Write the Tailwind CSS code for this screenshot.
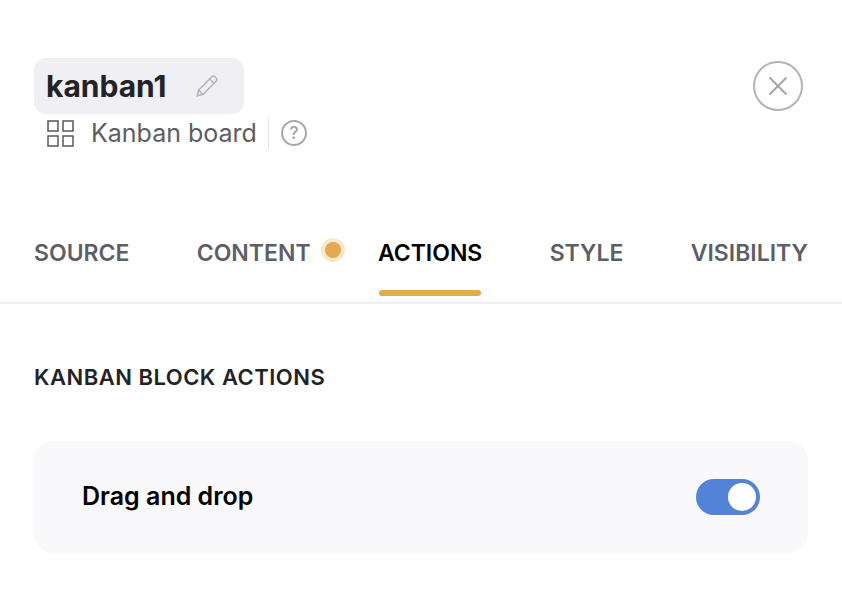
<!DOCTYPE html>
<html lang="en">
<head>
    <meta charset="UTF-8">
    <title>Kanban block settings</title>
    <script src="https://cdn.jsdelivr.net/npm/@tailwindcss/browser@4"></script>
</head>
<body class="bg-white font-['Inter',sans-serif] h-[598px] w-[842px] overflow-hidden">
    <header class="flex justify-between pl-[34px] pr-[39px] pt-[58px] h-[206px]">
        <div>
            <div class="flex items-center w-[210px] h-[56px] rounded-[12px] bg-[#efeff4] pl-[12px] gap-[27px]">
                <span class="text-[30px] leading-none font-bold text-[#212326]">kanban1</span>
                <svg class="w-[26px] h-[26px] text-[#b5b5ba]" viewBox="0 0 24 24" fill="none" stroke="currentColor" stroke-width="1.4"><path d="M3 21l1.2-5.2L16.5 3.5a2 2 0 0 1 2.8 0l1.2 1.2a2 2 0 0 1 0 2.8L8.2 19.8 3 21z"/><path d="M14.5 5.5l4 4"/><path d="M4.2 15.8l4 4"/></svg>
            </div>
            <div class="flex items-center h-[40px] -mt-[1px] pl-[13px]">
                <svg class="w-[27px] h-[27px] text-[#57585c]" viewBox="0 0 27 27" fill="none" stroke="currentColor" stroke-width="1.5"><rect x="1" y="1" width="10" height="10"/><rect x="16" y="1" width="10" height="10"/><rect x="1" y="16" width="10" height="10"/><rect x="16" y="16" width="10" height="10"/></svg>
                <span class="ml-[17px] text-[25px] leading-none text-[#5c5d63]">Kanban board</span>
                <span class="ml-[11px] w-px h-[32px] bg-[#e4e4e7]"></span>
                <span class="ml-[12px] flex items-center justify-center w-[26px] h-[26px] rounded-full border-2 border-[#a9a9ad] text-[17px] leading-none font-medium text-[#a0a0a4]">?</span>
            </div>
        </div>
        <button class="flex items-center justify-center w-[50px] h-[50px] mt-[3px] rounded-full border-2 border-[#b4b4b8]">
            <svg class="w-[22px] h-[22px] text-[#a3a3a7]" viewBox="0 0 22 22" fill="none" stroke="currentColor" stroke-width="1.8" stroke-linecap="round"><path d="M3 3l16 16M19 3L3 19"/></svg>
        </button>
    </header>

    <nav class="flex justify-between px-[34px] h-[98px] border-b-2 border-[#efeff1] text-[23px] font-semibold text-[#5e5f66]">
        <a class="pt-[33px] leading-[28px]">SOURCE</a>
        <a class="relative pt-[33px] leading-[28px]">CONTENT
            <span class="absolute -right-[34px] top-[32px] w-[24px] h-[24px] rounded-full bg-[#f9e8ce] flex items-center justify-center"><span class="block w-[16px] h-[16px] rounded-full bg-[#e4aa50]"></span></span>
        </a>
        <a class="relative pt-[33px] leading-[28px] text-black">ACTIONS
            <span class="absolute left-[1px] right-[1px] top-[84px] h-[6px] rounded-full bg-[#e4aa50]"></span>
        </a>
        <a class="pt-[33px] leading-[28px]">STYLE</a>
        <a class="pt-[33px] leading-[28px]">VISIBILITY</a>
    </nav>

    <main class="px-[34px] pt-[59px]">
        <h2 class="text-[22px] leading-[28px] font-semibold tracking-[0.5px] text-[#212326]">KANBAN BLOCK ACTIONS</h2>
        <div class="flex items-center justify-between mt-[50px] h-[112px] rounded-[20px] bg-[#f9f9fb] pl-[48px] pr-[48px]">
            <span class="text-[25px] font-semibold text-black">Drag and drop</span>
            <span class="flex items-center justify-end w-[64px] h-[36px] rounded-full bg-[#5283d6] pr-[4px]"><span class="block w-[28px] h-[28px] rounded-full bg-white"></span></span>
        </div>
    </main>
</body>
</html>
